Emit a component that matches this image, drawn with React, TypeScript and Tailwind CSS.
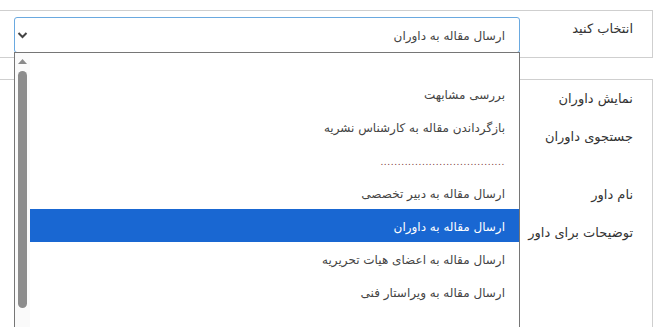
import React from "react";

const options = [
  { t: "بررسی مشابهت" },
  { t: "بازگرداندن مقاله به کارشناس نشریه" },
  { t: "dots" },
  { t: "ارسال مقاله به دبیر تخصصی" },
  { t: "ارسال مقاله به داوران", sel: true },
  { t: "ارسال مقاله به اعضای هیات تحریریه" },
  { t: "ارسال مقاله به ویراستار فنی" },
  { t: "" },
];

export default function App() {
  return (
    <div
      className="relative w-[669px] h-[327px] overflow-hidden bg-white text-[12px] text-[#333]"
      style={{ fontFamily: '"DejaVu Sans", "Noto Sans", sans-serif' }}
    >
      {/* Panel 1 */}
      <div
        dir="rtl"
        className="mt-[10px] w-[653px] h-[48px] border-y border-r border-[#cfcfcf] flex items-start pr-[19px]"
      >
        <div className="w-[113px] h-full flex items-center pb-[10px] text-[#333] text-[13px]">انتخاب کنید</div>
        <div className="mt-[6px] w-[506px] h-[36px] rounded-[3px] border border-[#6aa9e0] flex items-center pr-[14px] pl-[2px] justify-between">
          <span className="text-[#444] pt-[2px]">ارسال مقاله به داوران</span>
          <svg width="11" height="8" viewBox="0 0 11 8">
            <path d="M1.5 2 L5.5 6 L9.5 2" fill="none" stroke="#444" strokeWidth="2" />
          </svg>
        </div>
      </div>

      {/* Panel 2 */}
      <div dir="rtl" className="mt-[21px] w-[653px] h-[260px] border-t border-r border-[#cfcfcf] pr-[19px] text-[#333] text-[13px]">
        <div className="h-[38px] flex items-center">نمایش داوران</div>
        <div className="h-[38px] flex items-center">جستجوی داوران</div>
        <div className="h-[20px]" />
        <div className="h-[38px] flex items-center">نام داور</div>
        <div className="h-[38px] flex items-center">توضیحات برای داور</div>
      </div>

      {/* Dropdown list overlay */}
      <div className="absolute left-[14px] top-[52px] w-[506px] h-[290px] border border-[#767676] bg-white flex">
        <div className="w-[15px] h-full bg-[#fafafa] flex flex-col items-center">
          <svg width="9" height="5" viewBox="0 0 9 5" className="mt-[6px]">
            <path d="M0 5 L4.5 0 L9 5 Z" fill="#8a8a8a" />
          </svg>
          <div className="mt-[7px] w-[9px] h-[237px] rounded-full bg-[#8c8c8c]" />
        </div>
        <div dir="rtl" className="flex-1 flex flex-col">
          <div className="h-[24px] shrink-0" />
          {options.map((o, i) =>
            o.t === "dots" ? (
              <div key={i} className="h-[33px] shrink-0 flex items-center pr-[14px] text-[#7a3535] tracking-[0.6px]">
                <span className="text-[9px] leading-none pt-[6px]">
                  ....................................
                </span>
              </div>
            ) : (
              <div
                key={i}
                className={
                  "h-[33px] shrink-0 flex items-center pr-[14px] pt-[2px] " +
                  (o.sel ? "bg-[#1967d2] text-white" : "text-[#444]")
                }
              >
                {o.t}
              </div>
            )
          )}
        </div>
      </div>
    </div>
  );
}
